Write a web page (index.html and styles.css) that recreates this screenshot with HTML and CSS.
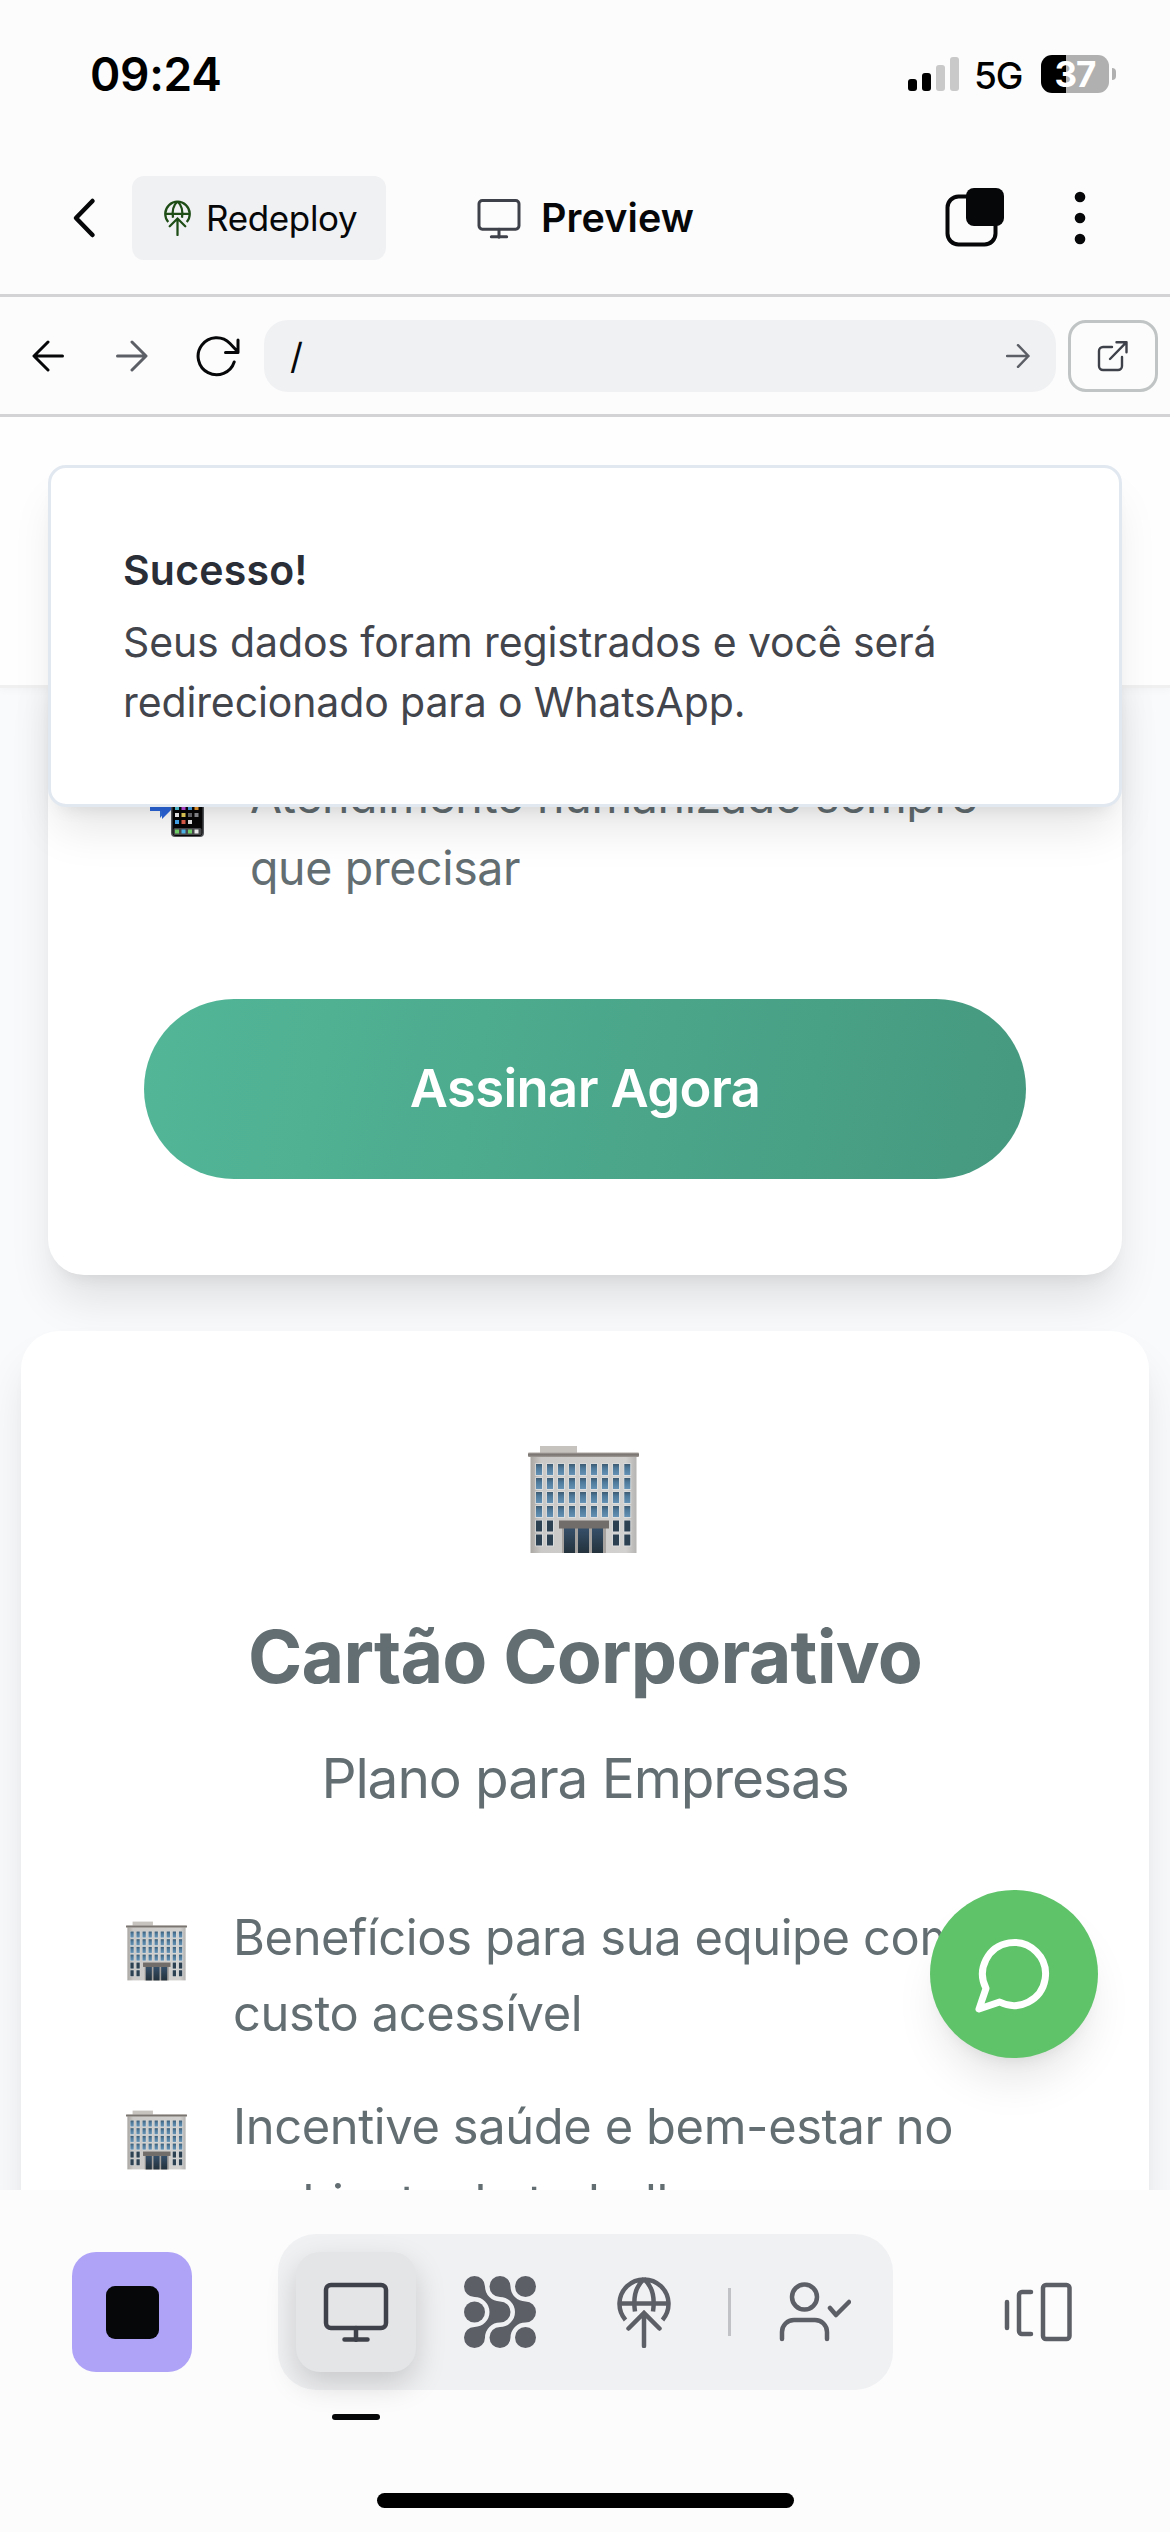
FILE: index.html
```html
<!DOCTYPE html>
<html lang="pt-BR">
<head>
<meta charset="utf-8">
<title>Preview</title>
<link rel="stylesheet" href="styles.css">
</head>
<body>
<svg class="defs" width="0" height="0">
  <defs>
    <linearGradient id="wall" x1="0" y1="0" x2="1" y2="0">
      <stop offset="0" stop-color="#aaa7a3"/><stop offset=".1" stop-color="#cbc9c7"/><stop offset=".9" stop-color="#d2d1cf"/><stop offset="1" stop-color="#b5b4b2"/>
    </linearGradient>
    <linearGradient id="roof" x1="0" y1="0" x2="0" y2="1">
      <stop offset="0" stop-color="#aaa5a0"/><stop offset=".5" stop-color="#77726e"/><stop offset="1" stop-color="#a19c96"/>
    </linearGradient>
    <linearGradient id="pane" x1="0" y1="0" x2="0" y2="1">
      <stop offset="0" stop-color="#3d5a70"/><stop offset=".35" stop-color="#4d7899"/><stop offset="1" stop-color="#6593b5"/>
    </linearGradient>
    <linearGradient id="door" x1="0" y1="0" x2="0" y2="1">
      <stop offset="0" stop-color="#36506a"/><stop offset="1" stop-color="#24323c"/>
    </linearGradient>
    <g id="win"><rect x="-.7" y="-.7" width="7.6" height="12.6" fill="#dcdfe0"/><rect width="6" height="11" fill="url(#pane)"/></g>
    <g id="win-dark"><rect x="-.7" y="-.7" width="7.6" height="12.6" fill="#dcdfe0"/><rect width="6" height="11" fill="#2c4152"/></g>
    <g id="pair"><use href="#win"/><use href="#win" x="11"/></g>
    <g id="floor"><use href="#pair"/><use href="#pair" x="22"/><use href="#pair" x="44"/><use href="#pair" x="66"/><use href="#win" x="88.3"/></g>
    <g id="floor-dark"><use href="#win-dark"/><use href="#win-dark" x="11"/><use href="#win-dark" x="77"/><use href="#win-dark" x="88.3"/></g>
    <symbol id="office" viewBox="0 0 111 107">
      <rect x="12" y="0" width="37" height="8" fill="#c6c2be"/>
      <rect x="2.5" y="9" width="106" height="98" fill="url(#wall)"/>
      <rect x="0" y="6.5" width="111" height="4.5" rx="1" fill="url(#roof)"/>
      <use href="#floor" x="8" y="18"/><use href="#floor" x="8" y="32"/><use href="#floor" x="8" y="46"/><use href="#floor" x="8" y="60"/>
      <use href="#floor-dark" x="8" y="74.5"/><use href="#floor-dark" x="8" y="88.5"/>
      <rect x="34" y="81" width="44" height="26" fill="#a5a29f"/>
      <rect x="36" y="82" width="11" height="25" fill="url(#door)"/><rect x="50" y="82" width="11" height="25" fill="url(#door)"/><rect x="64" y="82" width="11" height="25" fill="url(#door)"/>
      <rect x="31" y="74.5" width="50" height="8" fill="#716d6a"/>
    </symbol>
    <symbol id="phone-arrow" viewBox="0 0 60 62">
      <rect x="24" y="1" width="33" height="60" rx="4" fill="#55585c"/>
      <rect x="25.5" y="2" width="30" height="58" rx="3.5" fill="#060606"/>
      <path d="M3 20h10v-9l14 15-14 16v-9H3z" fill="#2f6fdc"/>
      <path d="M3 21h21v13l-9 9v-8H3z" fill="#2b66dd"/>
      <g><rect x="28" y="30" width="4" height="4" fill="#53c7dd"/><rect x="34.500" y="30" width="4" height="4" fill="#c04be0"/><rect x="41" y="30" width="4" height="4" fill="#45a3e8"/><rect x="47.500" y="30" width="4" height="4" fill="#f09a2c"/>
      <rect x="28" y="37" width="4" height="4" fill="#f4f4f4"/><rect x="34.500" y="37" width="4" height="4" fill="#e9d15a"/><rect x="41" y="37" width="4" height="4" fill="#66686c"/><rect x="47.500" y="37" width="4" height="4" fill="#8b8d90"/>
      <rect x="28" y="44" width="4" height="4" fill="#48a9f0"/><rect x="34.500" y="44" width="4" height="4" fill="#e0604c"/><rect x="41" y="44" width="4" height="4" fill="#e8e8e8"/></g>
      <rect x="26.500" y="52" width="28" height="7" rx="1.500" fill="#4a4b4e"/>
      <rect x="28" y="53.500" width="4" height="4" fill="#74d66b"/><rect x="34.500" y="53.500" width="4" height="4" fill="#4fb8ee"/><rect x="41" y="53.500" width="4" height="4" fill="#74d66b"/><rect x="47.500" y="53.500" width="4" height="4" fill="#f2f2f2"/>
    </symbol>
    <symbol id="monitor" viewBox="0 0 66 60">
      <g fill="none" stroke="currentColor" stroke-width="4.500" stroke-linecap="round"><rect x="3" y="3" width="60" height="43" rx="5"/><path d="M33 46v12M21.500 57.500h23"/></g>
    </symbol>
    <symbol id="globe" viewBox="0 0 54 72">
      <g fill="none" stroke="currentColor" stroke-width="4.500"><path d="M8.500 44A24.500 24.500 0 1 1 45.500 44"/><path d="M2.500 27.500h49M27 3c-8 7-11 19-9 32.500M27 3c8 7 11 19 9 32.500"/><path d="M27 70V38M11.500 52.500L27 37l15.500 15.500" stroke-linecap="round"/></g>
    </symbol>
  </defs>
</svg>

<div class="screen">
  <div class="status">
    <span class="clock">09:24</span>
    <div class="status-right">
      <div class="signal"><i class="s1"></i><i class="s2"></i><i class="s3"></i><i class="s4"></i></div>
      <span class="net">5G</span>
      <div class="battery"><div class="cell">37</div><i class="nub"></i></div>
    </div>
  </div>

  <header class="topbar">
    <svg class="chevron" viewBox="0 0 24 42"><path d="M20.500 4L4 21l16.500 17" fill="none" stroke="#060709" stroke-width="4.500" stroke-linecap="round" stroke-linejoin="round"/></svg>
    <div class="redeploy"><svg class="redeploy-icon"><use href="#globe"/></svg><span>Redeploy</span></div>
    <div class="title"><svg class="title-icon"><use href="#monitor"/></svg><span>Preview</span></div>
    <svg class="tabs" viewBox="0 0 60 60"><rect x="2.500" y="8.500" width="48" height="48" rx="11" fill="none" stroke="#060709" stroke-width="4"/><rect x="21" y="0" width="38" height="38" rx="8" fill="#060709"/></svg>
    <svg class="dots" viewBox="0 0 12 54"><g fill="#060709"><circle cx="6" cy="6" r="5.300"/><circle cx="6" cy="27" r="5.300"/><circle cx="6" cy="48" r="5.300"/></g></svg>
  </header>

  <div class="urlbar">
    <svg class="nav-icon back" viewBox="0 0 32 32"><path d="M30.500 16H2.500M16 2L2 16l14 14"/></svg>
    <svg class="nav-icon fwd" viewBox="0 0 32 32"><path d="M1.500 16h28M16 2l14 14-14 14"/></svg>
    <svg class="nav-icon reload" viewBox="0 0 44 42"><path d="M38.200 27A18.500 18.500 0 1 1 34 8.500L42 17M42 5v12.500H29.500"/></svg>
    <div class="address"><span>/</span><svg class="nav-icon go" viewBox="0 0 24 24"><path d="M1 12h21.500M12 1.200L22.500 12 12 22.800"/></svg></div>
    <div class="external"><svg class="nav-icon ext" viewBox="0 0 30 30"><path d="M14 6H5a4 4 0 0 0-4 4v15a4 4 0 0 0 4 4h15a4 4 0 0 0 4-4v-9M12 18L28.500 1.200M18.500 1.200h10v10"/></svg></div>
  </div>

  <main class="viewport">
    <div class="site-nav"></div>
    <section class="card card-person">
      <div class="feature">
        <svg class="emoji"><use href="#phone-arrow"/></svg>
        <p class="t-person">Atendimento humanizado sempre<br>que precisar</p>
      </div>
      <div class="subscribe"><span>Assinar Agora</span></div>
    </section>
    <section class="card card-company">
      <svg class="hero"><use href="#office"/></svg>
      <h2>Cartão Corporativo</h2>
      <p class="plan">Plano para Empresas</p>
      <div class="feature"><svg class="emoji"><use href="#office"/></svg><p>Benefícios para sua equipe com<br>custo acessível</p></div>
      <div class="feature"><svg class="emoji"><use href="#office"/></svg><p>Incentive saúde e bem-estar no<br>ambiente de trabalho</p></div>
    </section>
    <div class="toast">
      <strong>Sucesso!</strong>
      <p>Seus dados foram registrados e você será<br>redirecionado para o WhatsApp.</p>
    </div>
    <div class="fab"><svg viewBox="0 0 24 24"><path d="M7.900 20A9 9 0 1 0 4 16.100L2 22Z" fill="none" stroke="#fff" stroke-width="2" stroke-linecap="round" stroke-linejoin="round"/></svg></div>
  </main>

  <footer class="dock">
    <div class="dock-row">
      <div class="stop"><i></i></div>
      <div class="pill">
        <div class="tab active"><svg class="i-monitor"><use href="#monitor"/></svg></div>
        <div class="tab"><svg class="i-grid" viewBox="0 0 72 72" fill="currentColor"><path id="chain" d="M10.500 0A10.500 10.500 0 0 1 21 10.500A15 15 0 0 0 36 25.500A10.500 10.500 0 0 1 36 46.500A15 15 0 0 0 21 61.500A10.500 10.500 0 1 1 10.500 51A15 15 0 0 0 10.500 21A10.500 10.500 0 1 1 10.500 0Z"/><use href="#chain" x="25.500"/><circle cx="10.500" cy="36" r="10.500"/><circle cx="61.500" cy="10.500" r="10.500"/><circle cx="61.500" cy="61.500" r="10.500"/></svg></div>
        <div class="tab"><svg class="i-globe"><use href="#globe"/></svg></div>
        <i class="divider"></i>
        <div class="tab"><svg class="i-user" viewBox="0 0 72 60"><g fill="none" stroke="currentColor" stroke-width="4.500" stroke-linecap="round" stroke-linejoin="round"><circle cx="25.500" cy="15" r="12.500"/><path d="M3 57v-7a12 12 0 0 1 12-12h21a12 12 0 0 1 12 12v7M51 26l6 7L70 20"/></g></svg></div>
      </div>
      <div class="tab"><svg class="i-panels" viewBox="0 0 68 60"><g fill="none" stroke="currentColor" stroke-width="4.500" stroke-linecap="round"><rect x="39" y="3" width="26.500" height="54" rx="3"/><path d="M27 10H18a3 3 0 0 0-3 3v36a3 3 0 0 0 3 3h9M3 20v26"/></g></svg></div>
    </div>
    <div class="home"></div>
  </footer>
</div>
</body>
</html>
```
FILE: styles.css
```css
* { box-sizing: border-box; }
body { margin: 0; background: #fcfcfc; font-family: Inter, "Liberation Sans", sans-serif; }
p, h2 { margin: 0; }
svg { display: block; flex: none; }
.defs { position: absolute; }
.screen { width: 1170px; height: 2532px; overflow: hidden; display: flex; flex-direction: column; }

/* status bar */
.status { height: 150px; padding: 0 54px 0 90px; display: flex; justify-content: space-between; align-items: flex-start; color: #000; }
.clock { margin-top: 44px; font-size: 46px; line-height: 60px; font-weight: 600; letter-spacing: -0.3px; }
.status-right { display: flex; align-items: flex-start; }
.signal { display: flex; align-items: flex-end; gap: 5px; height: 34px; margin-top: 57px; }
.signal i { width: 9px; border-radius: 3px; background: #000; }
.s1 { height: 12px; } .s2 { height: 18px; }
.signal .s3 { height: 26px; background: #c9c9c9; }
.signal .s4 { height: 34px; background: #c9c9c9; }
.net { width: 82px; padding-left: 15px; margin-top: 52px; font-size: 37px; line-height: 48px; font-weight: 500; letter-spacing: -1px; }
.battery { display: flex; align-items: center; gap: 3px; margin-top: 55px; }
.cell { width: 68px; height: 38px; border-radius: 11px; background: linear-gradient(to right, #000 25px, #b0b0b0 25px); color: #fff; font-size: 35px; line-height: 39px; font-weight: 700; text-align: center; letter-spacing: -1px; }
.nub { width: 4px; height: 12px; border-radius: 0 4px 4px 0; background: #b0b0b0; }

/* app header */
.topbar { height: 147px; padding: 26px 84px 0 72px; border-bottom: 3px solid #d3d3d5; display: flex; align-items: flex-start; color: #060709; }
.chevron { width: 24px; height: 42px; margin: 21px 36px 0 0; }
.redeploy { width: 254px; height: 84px; padding-left: 32px; display: flex; align-items: center; border-radius: 12px; background: #f0f1f3; font-size: 35px; letter-spacing: -0.35px; }
.redeploy-icon { width: 27px; height: 36px; margin-right: 15px; color: #1f4d16; }
.title { height: 84px; margin-left: 91px; display: flex; align-items: center; font-size: 39.5px; font-weight: 600; letter-spacing: 0.1px; }
.title-icon { width: 44px; height: 41px; margin-right: 20px; color: #3f414a; }
.tabs { width: 60px; height: 60px; margin: 12px 0 0 auto; }
.dots { width: 12px; height: 54px; margin: 15px 0 0 69px; }

/* address bar */
.urlbar { height: 120px; border-bottom: 3px solid #d3d3d5; padding: 0 12px 0 32px; display: flex; align-items: center; }
.nav-icon { fill: none; stroke: #060709; stroke-width: 3; stroke-linecap: round; stroke-linejoin: round; }
.back { width: 32px; height: 32px; }
.fwd { width: 32px; height: 32px; margin-left: 52px; stroke: #5d5f67; }
.reload { width: 44px; height: 42px; margin: 0 24px 0 48px; }
.address { flex: 1; height: 72px; padding: 0 26px; border-radius: 24px; background: #f0f1f3; display: flex; align-items: center; justify-content: space-between; font-size: 36px; color: #060709; }
.go { width: 24px; height: 24px; stroke: #5d5f67; stroke-width: 2.5; }
.external { width: 90px; height: 72px; margin-left: 12px; border: 3px solid #c0c4c4; border-radius: 18px; display: flex; align-items: center; justify-content: center; }
.ext { width: 30px; height: 30px; stroke: #3f414a; stroke-width: 2.4; overflow: visible; }

/* previewed site */
.viewport { position: relative; height: 1773px; overflow: hidden; background: #f9fafc; color: #636e72; }
.site-nav { position: relative; z-index: 1; height: 271px; background: #fefefe; border-bottom: 3px solid #f0f0f1; box-shadow: 0 2px 8px rgba(0,0,0,.03); }
.card { background: #fff; box-shadow: 0 30px 45px -5px rgba(0,0,0,.1), 0 12px 18px -12px rgba(0,0,0,.1); }
.card-person { margin: -40px 48px 56px; padding: 112px 96px 96px; border-radius: 36px; }
.feature { display: flex; align-items: flex-start; }
.card-person .feature { margin-bottom: 95px; font-size: 46.5px; line-height: 72px; letter-spacing: -0.35px; }
.card-person .emoji { width: 60px; height: 62px; margin: 16px 43px 0 3px; }
.subscribe { height: 180px; padding-bottom: 2px; border-radius: 90px; background: linear-gradient(100deg, #52b697, #45997f); color: #fff; display: flex; align-items: center; justify-content: center; font-size: 52.5px; font-weight: 600; letter-spacing: -0.6px; }
.card-company { height: 1100px; margin: 0 21px; padding: 115px 101px 0; border-radius: 38px; }
.hero { width: 111px; height: 107px; margin: 0 0 0 406px; }
.card-company h2 { margin-top: 62px; font-size: 73.5px; line-height: 84px; font-weight: 700; text-align: center; letter-spacing: -0.8px; }
.plan { margin: 35px 0 78px; font-size: 55px; line-height: 88px; text-align: center; letter-spacing: -1.1px; }
.card-company .feature { margin-bottom: 37.8px; font-size: 48.8px; line-height: 75.6px; letter-spacing: -0.37px; }
.card-company .feature p { white-space: nowrap; }
.card-company .emoji { width: 61px; height: 60px; margin: 21px 46px 0 4px; }
.toast { position: absolute; z-index: 2; top: 48px; left: 48px; width: 1074px; height: 342px; padding: 72px; border: 3px solid #e2e8f0; border-radius: 18px; background: #fff; box-shadow: 0 30px 45px -9px rgba(0,0,0,.1), 0 12px 18px -12px rgba(0,0,0,.1); font-size: 41px; line-height: 60px; letter-spacing: -0.12px; color: #43454d; display: flex; flex-direction: column; gap: 12px; }
.toast strong { font-weight: 600; letter-spacing: 0.2px; color: #2a2e36; }
.fab { position: absolute; z-index: 2; left: 930px; top: 1473px; width: 168px; height: 168px; border-radius: 50%; background: #5fc369; display: flex; align-items: center; justify-content: center; box-shadow: 0 30px 45px -9px rgba(0,0,0,.1), 0 12px 18px -12px rgba(0,0,0,.1); }
.fab svg { width: 84px; height: 84px; }

/* bottom dock */
.dock { flex: 1; background: #fcfcfc; padding-top: 44px; color: #5d5f67; }
.dock-row { height: 156px; padding: 0 72px; display: flex; align-items: center; justify-content: space-between; }
.stop { width: 120px; height: 120px; border-radius: 24px; background: #afa3f8; display: flex; align-items: center; justify-content: center; }
.stop i { width: 53px; height: 53px; border-radius: 9px; background: #060709; }
.pill { width: 615px; height: 156px; padding: 18px; border-radius: 38px; background: #f0f1f3; display: flex; align-items: center; gap: 24px; }
.tab { width: 120px; height: 120px; flex: none; border-radius: 24px; display: flex; align-items: center; justify-content: center; }
.active { position: relative; background: #e4e5e7; color: #3f414a; box-shadow: 0 12px 30px rgba(0,0,0,.17); }
.active::after { content: ""; position: absolute; left: 36px; top: 162px; width: 48px; height: 6px; border-radius: 3px; background: #060709; }
.i-monitor { width: 66px; height: 60px; }
.i-grid { width: 72px; height: 72px; }
.i-globe { width: 54px; height: 72px; }
.i-user { width: 72px; height: 60px; }
.i-panels { width: 68px; height: 60px; }
.divider { width: 3px; height: 48px; background: #c0c2c5; }
.home { width: 417px; height: 15px; margin: 103px auto 0; border-radius: 8px; background: #000; }
```
